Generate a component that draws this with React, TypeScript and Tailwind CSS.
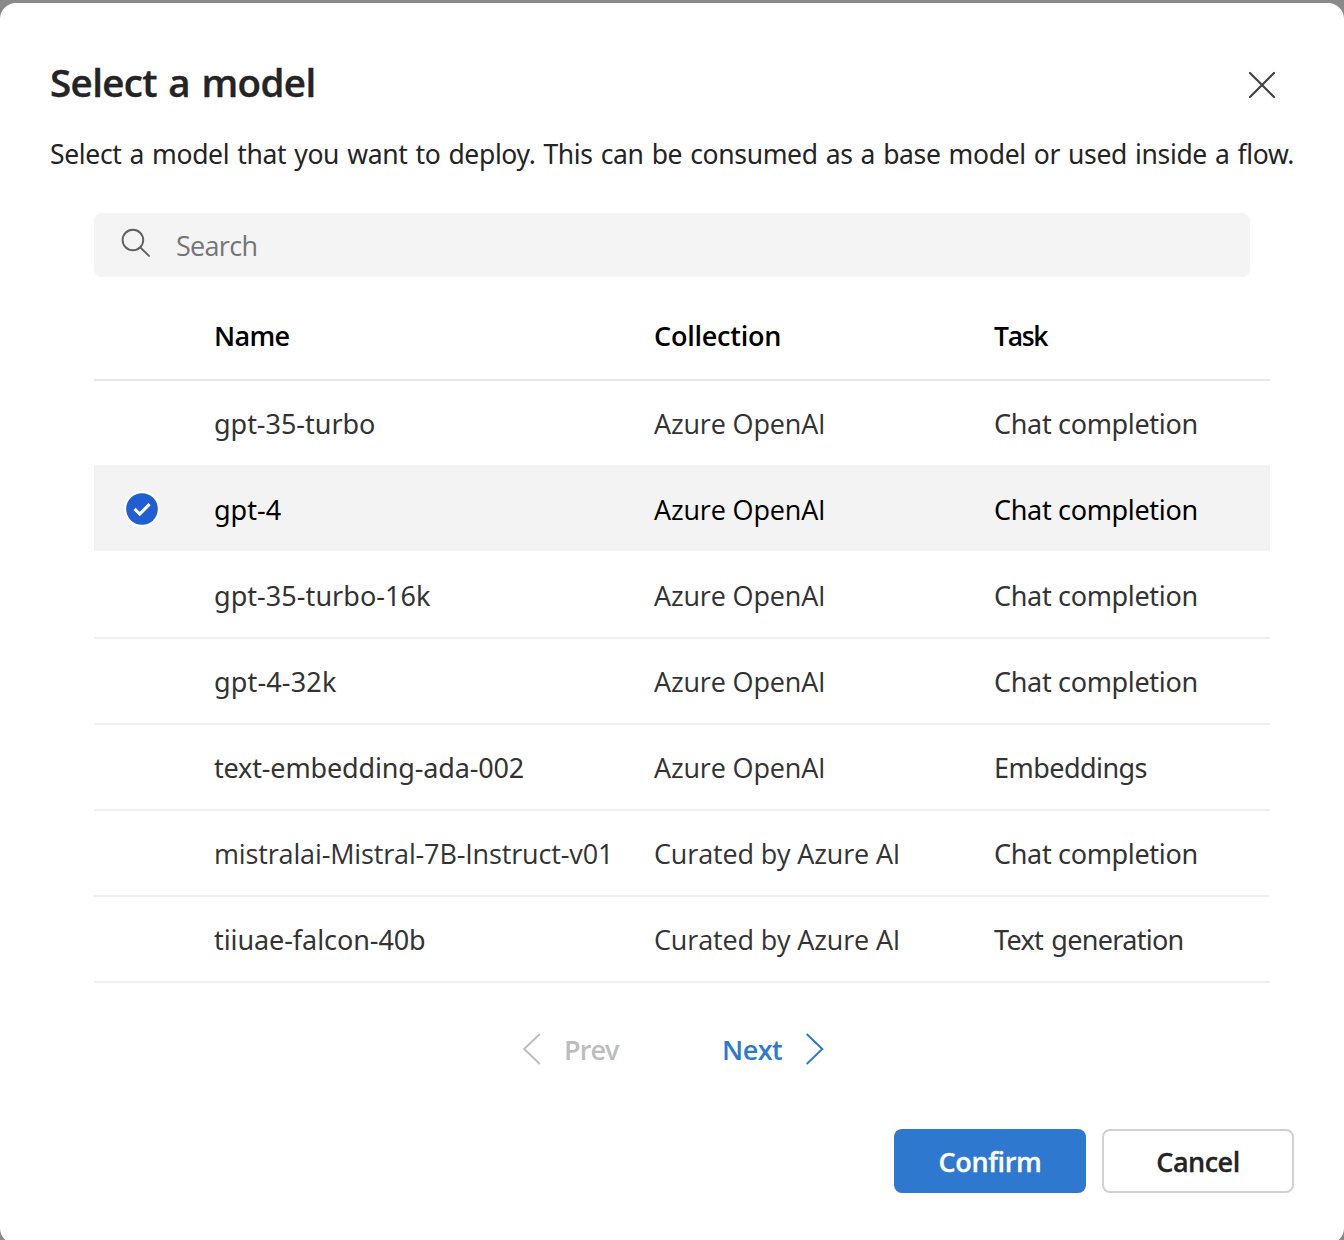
type Cell = { text: string; style: string };
type Model = { name: Cell; collection: Cell; task: Cell; selected?: boolean };

const azureOpenAI: Cell = { text: "Azure OpenAI", style: "font-['Open_Sans',sans-serif] tracking-[-0.16px]" };
const curated: Cell = { text: "Curated by Azure AI", style: "font-['Open_Sans',sans-serif] tracking-[-0.15px]" };
const chat: Cell = { text: "Chat completion", style: "tracking-[-0.33px]" };

const models: Model[] = [
  { name: { text: "gpt-35-turbo", style: "tracking-[-0.03px]" }, collection: azureOpenAI, task: chat },
  { name: { text: "gpt-4", style: "" }, collection: azureOpenAI, task: chat, selected: true },
  { name: { text: "gpt-35-turbo-16k", style: "tracking-[0.05px]" }, collection: azureOpenAI, task: chat },
  { name: { text: "gpt-4-32k", style: "tracking-[0.15px]" }, collection: azureOpenAI, task: chat },
  {
    name: { text: "text-embedding-ada-002", style: "tracking-[-0.16px]" },
    collection: azureOpenAI,
    task: { text: "Embeddings", style: "tracking-[-0.55px]" },
  },
  {
    name: { text: "mistralai-Mistral-7B-Instruct-v01", style: "font-['Open_Sans',sans-serif] tracking-[-0.15px]" },
    collection: curated,
    task: chat,
  },
  {
    name: { text: "tiiuae-falcon-40b", style: "tracking-[-0.08px]" },
    collection: curated,
    task: { text: "Text generation", style: "tracking-[-0.7px] [word-spacing:2px]" },
  },
];

const columns = "grid grid-cols-[120px_440px_340px_276px] items-center";

function CheckBadge() {
  return (
    <svg className="ml-[30px] block size-9" viewBox="0 0 36 36" fill="none">
      <circle cx="18" cy="18" r="18" fill="#fff" />
      <circle cx="18" cy="18" r="15.8" fill="#1f5fd2" />
      <path d="M10.6 17.9l5.2 5.1 9.8-9.9" stroke="#fff" strokeWidth="3.1" />
    </svg>
  );
}

function ModelRow({ model, border }: { model: Model; border: string }) {
  const tone = model.selected ? "bg-[#f3f3f3] text-black" : "text-[#333]";
  return (
    <div className={`${columns} h-[86px] border-t-2 ${border} ${tone}`}>
      <div>{model.selected && <CheckBadge />}</div>
      <div className={`pt-[2px] ${model.name.style}`}>{model.name.text}</div>
      <div className={`pt-[2px] ${model.collection.style}`}>{model.collection.text}</div>
      <div className={`pt-[2px] ${model.task.style}`}>{model.task.text}</div>
    </div>
  );
}

function rowBorder(index: number) {
  if (index === 0) return "border-[#e8e8e8]";
  if (models[index].selected) return "border-[#f3f3f3]";
  return models[index - 1].selected ? "border-transparent" : "border-[#f0f0f0]";
}

export default function App() {
  return (
    <div className="h-[1240px] w-[1344px] overflow-hidden bg-[#8a8a8a] pt-[3px] font-['Noto_Sans',sans-serif] text-[27px] leading-9 whitespace-nowrap">
      <div className="flex h-[1241px] flex-col rounded-2xl bg-white">
        <header className="flex h-[130px] shrink-0 items-start justify-between pt-[52px] pr-[68px] pl-[50px]">
          <h1 className="font-['Open_Sans',sans-serif] text-[38.5px] leading-[54px] font-semibold tracking-[-0.61px] text-[#242424] [-webkit-text-stroke:0.4px_#242424] [word-spacing:2px]">
            Select a model
          </h1>
          <button className="mt-[16px]" aria-label="Close">
            <svg className="block size-7" viewBox="0 0 28 28" fill="none" stroke="#424242" strokeWidth="2.2" strokeLinecap="round">
              <path d="M2 2l24 24M26 2L2 26" />
            </svg>
          </button>
        </header>
        <p className="h-20 shrink-0 pl-[50px] text-[26.5px] tracking-[-0.35px] text-[#242424] [word-spacing:1.5px]">
          <span className="block pt-[3px]">
            Select a model that you want to deploy. This can be consumed as a base model or used inside a flow.
          </span>
        </p>
        <div className="ml-[94px] flex h-16 w-[1156px] shrink-0 items-center rounded-lg bg-[#f4f4f4] text-[#757575]">
          <svg className="mb-[3px] ml-[26px] block size-8" viewBox="0 0 32 32" fill="none" stroke="#5f5f5f" strokeWidth="1.9" strokeLinecap="round">
            <circle cx="12.9" cy="12" r="10.3" />
            <path d="M20.3 19.4l8.7 8.5" />
          </svg>
          <span className="ml-6 pt-[2px] font-['Open_Sans',sans-serif] tracking-[-0.7px]">Search</span>
        </div>
        <div className="ml-[94px] w-[1176px] shrink-0">
          <div className={`${columns} h-[102px] pt-[15px] font-['Open_Sans',sans-serif] font-semibold text-black`}>
            <span />
            <span className="tracking-[-0.69px]">Name</span>
            <span className="tracking-[-0.22px]">Collection</span>
            <span className="text-[26.5px] tracking-[-1.3px]">Task</span>
          </div>
          <div className="border-b-2 border-[#f0f0f0]">
            {models.map((model, i) => (
              <ModelRow key={model.name.text} model={model} border={rowBorder(i)} />
            ))}
          </div>
        </div>
        <nav className="flex h-[146px] shrink-0 items-start pt-[47px] pl-[522px] font-['Open_Sans',sans-serif] font-semibold">
          <button className="flex items-center text-[#bdbdbd]">
            <svg className="block h-9 w-5" viewBox="0 0 20 36" fill="none" stroke="currentColor" strokeWidth="2">
              <path d="M17.8 3L2.2 18l15.6 15" />
            </svg>
            <span className="ml-[22px] w-[158px] pt-[2px] text-left tracking-[-0.9px]">Prev</span>
          </button>
          <button className="flex items-center text-[#2f78d0]">
            <span className="w-[82px] pt-[2px] text-left tracking-[-0.52px]">Next</span>
            <svg className="block h-9 w-5" viewBox="0 0 20 36" fill="none" stroke="currentColor" strokeWidth="2">
              <path d="M2.7 3l15.6 15L2.7 33" />
            </svg>
          </button>
        </nav>
        <footer className="flex justify-end gap-4 pr-[50px] font-['Open_Sans',sans-serif]">
          <button className="h-16 w-48 rounded-lg bg-[#2f78d0] pt-[2px] font-semibold tracking-[-0.36px] text-white [-webkit-text-stroke:0.3px_#fff]">
            Confirm
          </button>
          <button className="h-16 w-48 rounded-lg border-2 border-[#d1d1d1] bg-white pt-[2px] font-semibold tracking-[-0.5px] text-[#242424] [-webkit-text-stroke:0.3px_#242424]">
            Cancel
          </button>
        </footer>
      </div>
    </div>
  );
}
